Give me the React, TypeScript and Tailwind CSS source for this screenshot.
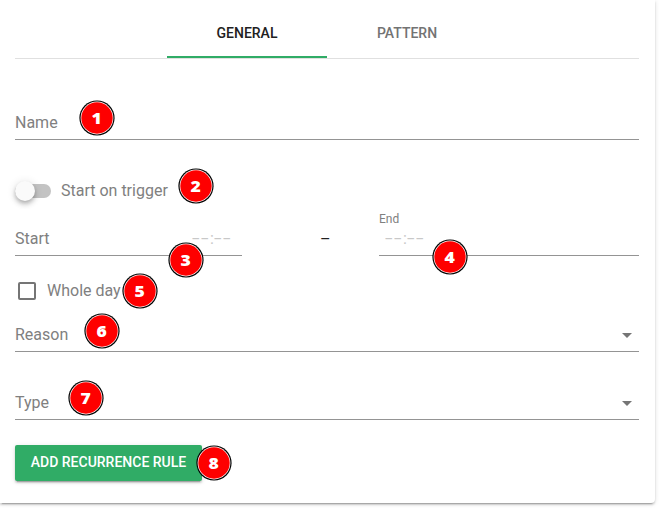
import type { ReactNode } from "react";

function Badge({ n, className }: { n: number; className: string }) {
  return (
    <span className={`absolute z-10 flex size-9 items-center justify-center pb-px ${className}`}>
      <svg className="absolute inset-0 size-9" viewBox="0 0 36 36">
        <circle cx="18" cy="18" r="17.6" fill="#000" />
        <circle cx="18" cy="18" r="16.4" fill="#fff" />
        <circle cx="18" cy="18" r="15.7" fill="#fe0000" />
      </svg>
      <span className="relative scale-x-110 font-['Noto_Sans','Open_Sans',sans-serif] text-base leading-none font-black text-white">
        {n}
      </span>
    </span>
  );
}

function Field({ className, children }: { className: string; children: ReactNode }) {
  return (
    <div className={`relative flex items-end border-b border-[#949494] pb-1 leading-6 ${className}`}>
      {children}
    </div>
  );
}

function TimePlaceholder({ className }: { className: string }) {
  return (
    <span className={`flex gap-[2px] text-[#c8c8c8] ${className}`}>
      <span className="inline-block w-[7px] origin-left scale-x-[1.7]">-</span>
      <span className="inline-block w-[7px] origin-left scale-x-[1.7]">-</span>
      <span className="inline-block w-[2px]">:</span>
      <span className="inline-block w-[7px] origin-left scale-x-[1.7]">-</span>
      <span className="inline-block w-[7px] origin-left scale-x-[1.7]">-</span>
    </span>
  );
}

function Caret() {
  return (
    <svg className="mr-[7px] mb-[9px] ml-auto h-[5px] w-[10px]" viewBox="0 0 10 5" fill="#757575">
      <path d="M0 0h10L5 5z" />
    </svg>
  );
}

export default function App() {
  return (
    <div className="h-[508px] w-[659px] overflow-hidden bg-white font-[Roboto,sans-serif] text-base text-[#808080]">
      <main className="h-[503px] w-[655px] rounded-br-[4px] bg-white pr-4 pl-[15px] shadow-[0_3px_1px_-2px_rgba(0,0,0,0.2),0_2px_2px_0_rgba(0,0,0,0.14),0_1px_5px_0_rgba(0,0,0,0.12)]">
        <nav className="flex h-[59px] justify-center border-b border-[#e0e0e0] text-sm font-medium">
          <button className="h-[58px] w-40 border-b-2 border-[#30ac66] pt-[10px] text-[#212121]">GENERAL</button>
          <button className="h-[58px] w-40 border-b-2 border-transparent pt-[10px] text-[#737373]">PATTERN</button>
        </nav>

        <Field className="h-[81px]">
          <label>Name</label>
          <Badge n={1} className="top-[41px] left-16" />
        </Field>

        <div className="relative flex h-[70px] items-end pb-[7px]">
          <span className="mb-[5px] flex h-[14px] w-9 items-center rounded-full bg-[#c3c3c3]">
            <span className="size-5 shrink-0 rounded-full bg-[#fafafa] shadow-[0_2px_4px_-1px_rgba(0,0,0,0.2),0_4px_5px_0_rgba(0,0,0,0.14),0_1px_10px_0_rgba(0,0,0,0.12)]" />
          </span>
          <span className="ml-[10px] leading-6">Start on trigger</span>
          <Badge n={2} className="top-7 left-[163px]" />
        </div>

        <div className="flex h-[46px] items-end">
          <Field className="h-[46px] w-[227px]">
            <label>Start</label>
            <TimePlaceholder className="mr-3 ml-auto" />
            <Badge n={3} className="top-8 left-[153px]" />
          </Field>
          <span className="w-[137px] pr-1 pb-1 pl-[78px] leading-6 text-[#212121]">–</span>
          <Field className="h-[46px] flex-1">
            <label className="absolute top-0 left-0 text-xs leading-[18px]">End</label>
            <TimePlaceholder className="ml-[6px]" />
            <Badge n={4} className="top-[29px] left-[53px]" />
          </Field>
        </div>

        <div className="relative flex h-[60px] items-start pt-[23px] leading-6">
          <span className="mt-[3px] ml-[3px] size-[18px] rounded-[2px] border-2 border-[#757575]" />
          <span className="ml-[11px]">Whole day</span>
          <Badge n={5} className="top-[17px] left-[107px]" />
        </div>

        <Field className="h-[36px]">
          <label>Reason</label>
          <Caret />
          <Badge n={6} className="-top-[3px] left-[69px]" />
        </Field>
        <Field className="h-[68px]">
          <label>Type</label>
          <Caret />
          <Badge n={7} className="top-7 left-[53px]" />
        </Field>

        <div className="relative pt-[25px]">
          <button className="h-9 w-[187px] rounded-[2px] bg-[#30ac66] pb-[2px] text-sm font-medium whitespace-nowrap text-white shadow-[0_3px_1px_-2px_rgba(0,0,0,0.2),0_2px_2px_0_rgba(0,0,0,0.14),0_1px_5px_0_rgba(0,0,0,0.12)]">
            ADD RECURRENCE RULE
          </button>
          <Badge n={8} className="top-[25px] left-[181px]" />
        </div>
      </main>
    </div>
  );
}
